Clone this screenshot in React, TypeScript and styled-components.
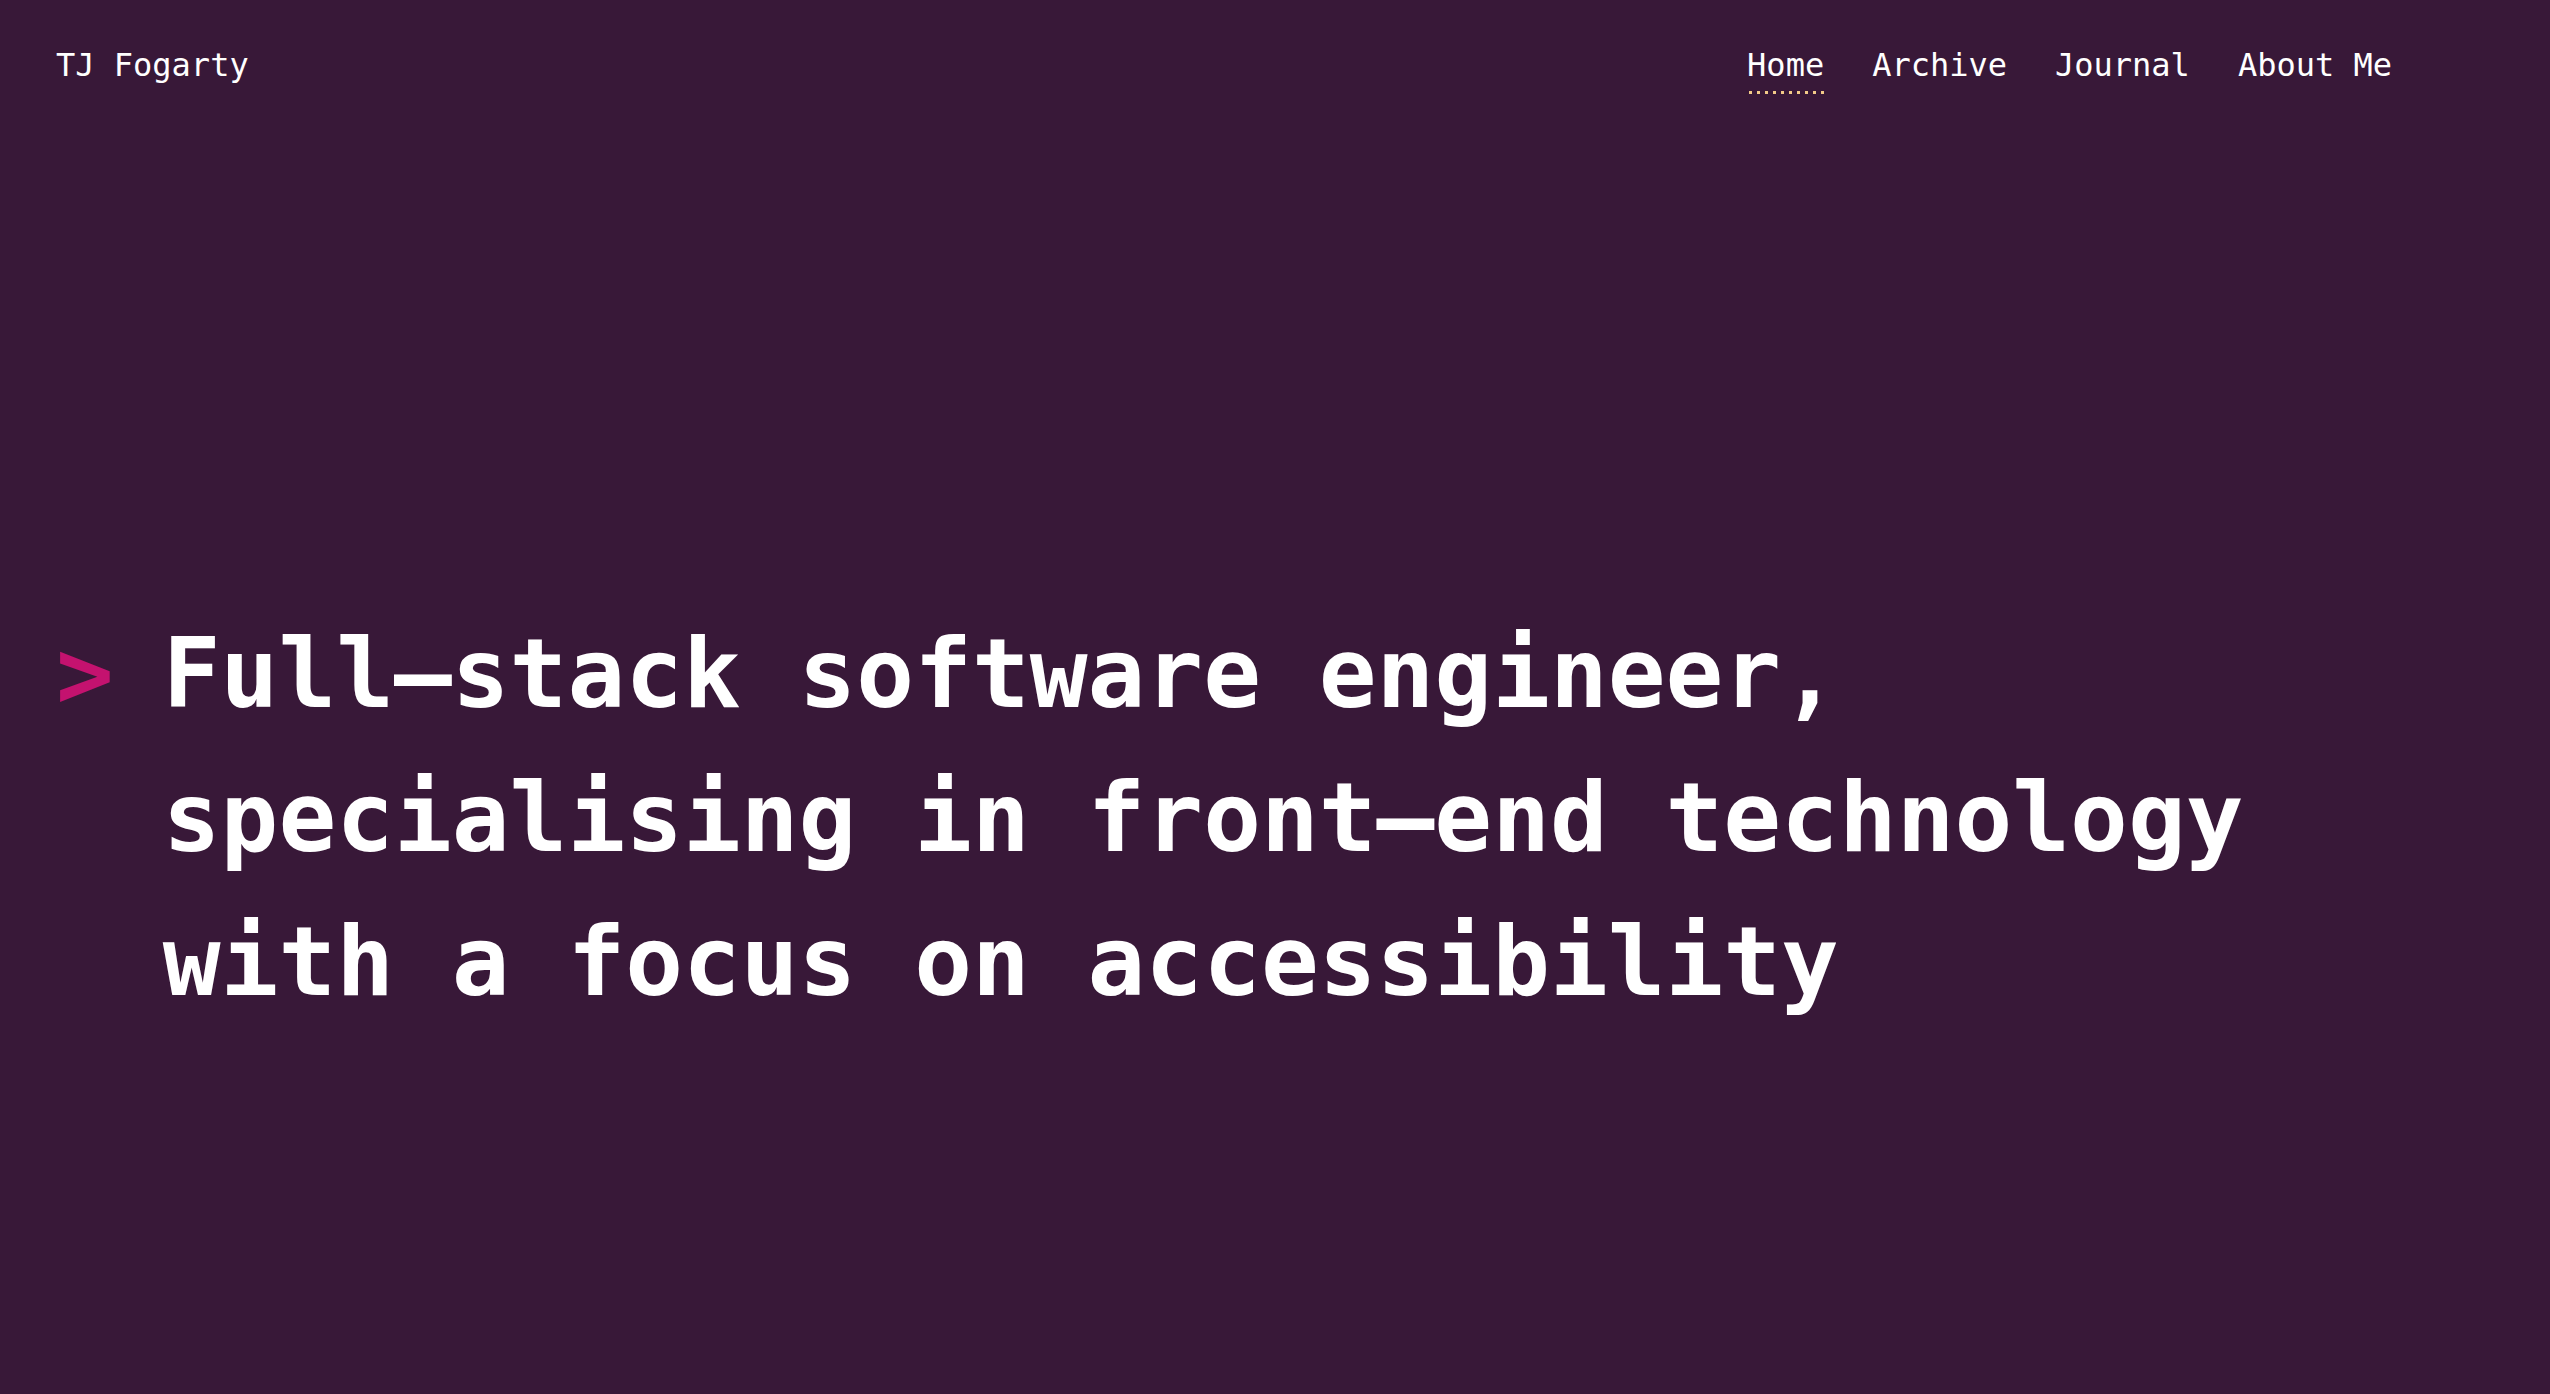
import React from "react";
import styled, { createGlobalStyle } from "styled-components";

const GlobalStyle = createGlobalStyle`
  html, body {
    margin: 0;
    padding: 0;
    background: #381838;
  }
  body {
    font-family: "DejaVu Sans Mono", "Liberation Mono", monospace;
    color: #ffffff;
  }
  * { box-sizing: border-box; }
`;

const Page = styled.div`
  min-height: 100vh;
  background: #381838;
  display: flex;
  flex-direction: column;
`;

const Header = styled.header`
  display: flex;
  align-items: flex-start;
  justify-content: space-between;
  padding: 47px 158px 0 56px;
  font-size: 32px;
  line-height: 37px;
`;

const Brand = styled.a`
  color: #ffffff;
  text-decoration: none;
`;

const NavList = styled.ul`
  display: flex;
  gap: 48px;
  list-style: none;
  margin: 0;
  padding: 0;
`;

const NavLink = styled.a<{ $active?: boolean }>`
  display: inline-block;
  color: #ffffff;
  text-decoration: none;
  padding-bottom: 10px;
  background-image: ${(p) =>
    p.$active
      ? "linear-gradient(to right, #f2ca88 3px, transparent 3px)"
      : "none"};
  background-size: 8px 3px;
  background-repeat: repeat-x;
  background-position: 2px 100%;
`;

const Main = styled.main`
  padding: 508px 53px 0 56px;
`;

const Hero = styled.h1`
  display: flex;
  gap: 49px;
  margin: 0;
  font-size: 96px;
  line-height: 144px;
  font-weight: 700;
`;

const Prompt = styled.span`
  flex: none;
  color: #c4126f;
`;

const Statement = styled.span`
  max-width: 2200px;
  color: #ffffff;
`;

const links = [
  { label: "Home", active: true },
  { label: "Archive" },
  { label: "Journal" },
  { label: "About Me" },
];

export default function App() {
  return (
    <Page>
      <GlobalStyle />
      <Header>
        <Brand href="#">TJ Fogarty</Brand>
        <nav>
          <NavList>
            {links.map((l) => (
              <li key={l.label}>
                <NavLink href="#" $active={l.active}>
                  {l.label}
                </NavLink>
              </li>
            ))}
          </NavList>
        </nav>
      </Header>
      <Main>
        <Hero>
          <Prompt aria-hidden="true">&gt;</Prompt>
          <Statement>
            Full–stack software engineer, specialising in front–end technology with a focus on accessibility
          </Statement>
        </Hero>
      </Main>
    </Page>
  );
}
